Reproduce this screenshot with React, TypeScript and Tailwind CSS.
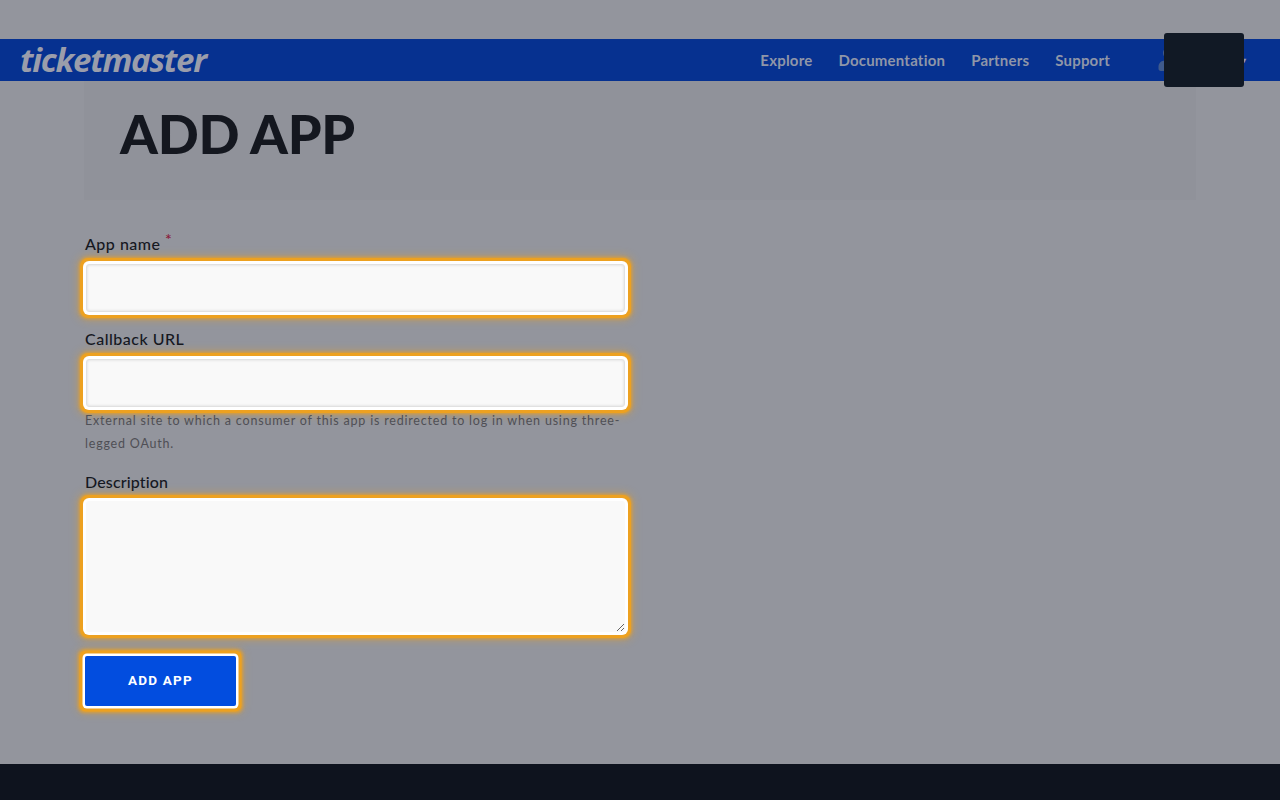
import React from 'react';
import { FaUser } from 'react-icons/fa';

const glow = 'shadow-[0_0_0_3px_#ffffff,0_0_0_6px_#eda120,0_0_3px_7px_rgba(237,161,32,0.7),0_0_9px_8px_rgba(237,161,32,0.4)]';
const inputGlow = 'shadow-[inset_0_0_3px_rgba(0,0,0,0.14),0_0_0_3px_#ffffff,0_0_0_6px_#eda120,0_0_3px_7px_rgba(237,161,32,0.7),0_0_9px_8px_rgba(237,161,32,0.4)]';
const inputClass = `mt-[10px] block h-[48px] w-[539px] ml-[2px] rounded-[3px] border border-[#e1e1e1] bg-[#f9f9f9] outline-none ${inputGlow}`;
const labelClass = 'block h-[20px] pl-px text-[16px] font-medium leading-[20px] text-[#16181f]';

const navLinks = ['Explore', 'Documentation', 'Partners', 'Support'];

export default function App() {
    return (
        <div className="relative h-screen w-full flex flex-col overflow-hidden bg-[#93959d] font-['Lato',sans-serif] text-[#14171f]">
            <div className="h-[39px] shrink-0" />

            <header className="h-[42px] shrink-0 flex items-center bg-[#063190] pl-[20px] pr-[34px]">
                <span className="font-['Open_Sans',sans-serif] text-[33px] font-bold italic leading-none tracking-[-1.25px] text-[#9a9dab] -mt-[2px]">
                    ticketmaster
                </span>
                <nav className="ml-auto flex items-center gap-[26px] text-[15px] font-bold text-[#8f96a8]">
                    {navLinks.map((link) => (
                        <a key={link} href="#" className="tracking-[0.2px]">
                            {link}
                        </a>
                    ))}
                    <div className="ml-[21px] flex w-[89px] items-center justify-between">
                        <FaUser className="w-[24px] h-[24px] -mt-[3px] text-[#3f5a8c]" />
                        <span className="text-[8px] text-[#939aac]">▾</span>
                    </div>
                </nav>
            </header>

            <div className="absolute left-[1164px] top-[33px] w-[80px] h-[54px] rounded-[3px] bg-[#111925]" />

            <main className="flex-1 px-[84px]">
                <div className="h-[119px] bg-[#90929a] pl-[36px] pt-[21px]">
                    <h1 className="text-[54px] font-black leading-[64px] tracking-[-0.25px] text-[#14171f]">ADD APP</h1>
                </div>

                <form className="w-[542px] pt-[34px]">
                    <label className={`${labelClass} tracking-[0.5px]`}>
                        App name <span className="relative -top-[5px] text-[16px] text-[#8a1a3a]">*</span>
                    </label>
                    <input className={inputClass} />

                    <label className={`${labelClass} mt-[17px] tracking-[0.5px]`}>Callback URL</label>
                    <input className={inputClass} />
                    <p className="mt-[2px] w-[540px] pl-px text-[12.5px] leading-[23px] tracking-[0.8px] text-[#4f4f55]">
                        External site to which a consumer of this app is redirected to log in when using three-legged OAuth.
                    </p>

                    <label className={`${labelClass} mt-[17px] tracking-[0.15px]`}>Description</label>
                    <textarea className={`mt-[9px] block h-[131px] w-[539px] ml-[2px] rounded-[3px] bg-[#f9f9f9] outline-none ${glow}`} />

                    <button
                        type="button"
                        className="mt-[24px] ml-px block h-[50px] w-[151px] rounded-[2px] bg-[#024ddf] pb-[2px] font-['Roboto',sans-serif] text-[13.5px] font-bold tracking-[1.2px] text-white shadow-[0_0_0_2.5px_#ffffff,0_0_0_5.5px_#eda120,0_0_3px_6.5px_rgba(237,161,32,0.7),0_0_9px_7px_rgba(237,161,32,0.4)]"
                    >
                        ADD APP
                    </button>
                </form>
            </main>

            <footer className="h-[36px] shrink-0 bg-[#0e131e]" />
        </div>
    );
}
